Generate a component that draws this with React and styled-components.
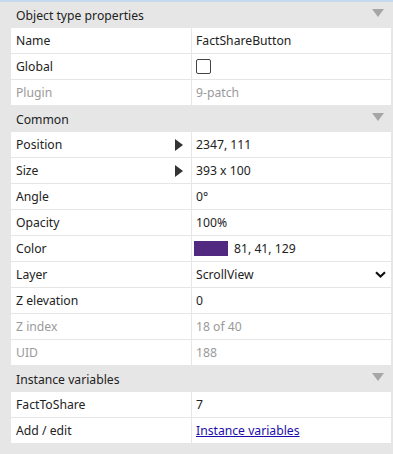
import React from "react";
import styled, { createGlobalStyle } from "styled-components";

const GlobalStyle = createGlobalStyle`
  html, body {
    margin: 0;
    padding: 0;
    background: #e6e6e6;
  }
  body {
    font-family: "Noto Sans", "Open Sans", sans-serif;
    font-size: 12.2px;
    color: #222;
  }
`;

const Panel = styled.div`
  width: 393px;
  height: 454px;
  background: #e6e6e6;
  border-top: 2px solid #c6dcee;
  box-sizing: border-box;
  padding: 0 2px 0 11px;
  overflow: hidden;
`;

const Header = styled.div`
  display: flex;
  align-items: center;
  justify-content: space-between;
  height: 26px;
  padding: 0 7px 0 5px;
`;

const Caret = styled.span`
  width: 0;
  height: 0;
  border-left: 6px solid transparent;
  border-right: 6px solid transparent;
  border-top: 8px solid #a6a6a6;
  margin-bottom: 4px;
`;

const Row = styled.div`
  display: grid;
  grid-template-columns: 181px 1fr;
  height: 26px;
  background: #fff;
  border-bottom: 1px solid #e6e6e6;
  box-sizing: border-box;
  color: ${p => (p.disabled ? "#9a9a9a" : "#222")};
`;

const Label = styled.div`
  display: flex;
  align-items: center;
  justify-content: space-between;
  padding: 0 8px 0 5px;
  border-right: 1px solid #e6e6e6;
`;

const Value = styled.div`
  display: flex;
  align-items: center;
  gap: 6px;
  padding: 0 5px 0 4px;
  min-width: 0;
`;

const Expand = styled.span`
  width: 0;
  height: 0;
  border-top: 6px solid transparent;
  border-bottom: 6px solid transparent;
  border-left: 8px solid #333;
`;

const Checkbox = styled.span`
  width: 13px;
  height: 13px;
  border: 1px solid #444;
  border-radius: 2px;
  background: #fff;
`;

const Swatch = styled.span`
  width: 34px;
  height: 15px;
  background: ${p => p.color};
  margin-left: -2px;
`;

const Select = styled.div`
  flex: 1;
  display: flex;
  align-items: center;
  justify-content: space-between;
`;

const Anchor = styled.a`
  color: #1a0dab;
  text-decoration: underline;
  cursor: pointer;
`;

function Chevron() {
  return (
    <svg width="11" height="7" viewBox="0 0 11 7">
      <path d="M1 1.2 L5.5 5.5 L10 1.2" fill="none" stroke="#111" strokeWidth="2.2" />
    </svg>
  );
}

function Section({ title }) {
  return (
    <Header>
      <span>{title}</span>
      <Caret />
    </Header>
  );
}

function Prop({ label, expandable, disabled, children }) {
  return (
    <Row disabled={disabled}>
      <Label>
        <span>{label}</span>
        {expandable && <Expand />}
      </Label>
      <Value>{children}</Value>
    </Row>
  );
}

export default function App() {
  return (
    <>
      <GlobalStyle />
      <Panel>
        <Section title="Object type properties" />
        <Prop label="Name">FactShareButton</Prop>
        <Prop label="Global">
          <Checkbox />
        </Prop>
        <Prop label="Plugin" disabled>
          9-patch
        </Prop>

        <Section title="Common" />
        <Prop label="Position" expandable>
          2347, 111
        </Prop>
        <Prop label="Size" expandable>
          393 x 100
        </Prop>
        <Prop label="Angle">0°</Prop>
        <Prop label="Opacity">100%</Prop>
        <Prop label="Color">
          <Swatch color="rgb(81, 41, 129)" />
          <span>81, 41, 129</span>
        </Prop>
        <Prop label="Layer">
          <Select>
            <span>ScrollView</span>
            <Chevron />
          </Select>
        </Prop>
        <Prop label="Z elevation">0</Prop>
        <Prop label="Z index" disabled>
          18 of 40
        </Prop>
        <Prop label="UID" disabled>
          188
        </Prop>

        <Section title="Instance variables" />
        <Prop label="FactToShare">7</Prop>
        <Prop label="Add / edit">
          <Anchor>Instance variables</Anchor>
        </Prop>
      </Panel>
    </>
  );
}
